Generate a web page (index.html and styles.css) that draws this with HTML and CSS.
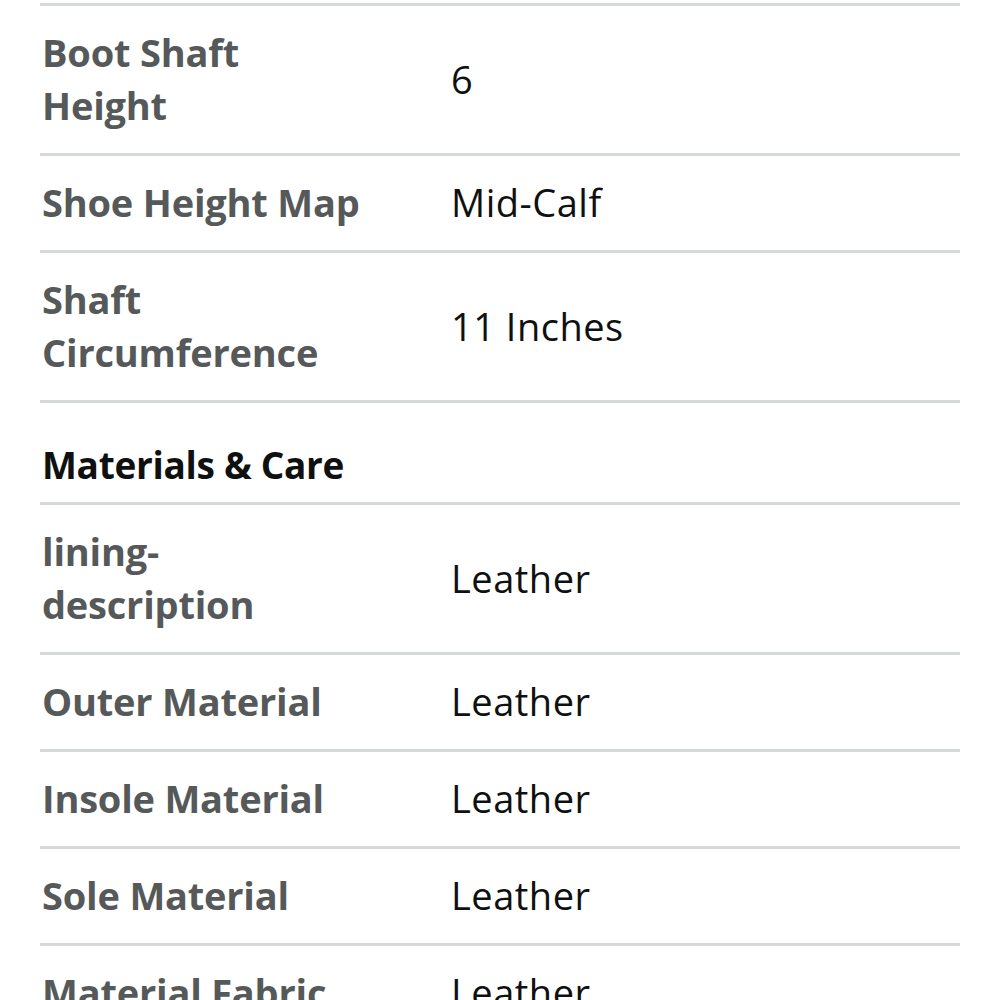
FILE: index.html
```html
<!DOCTYPE html>
<html>
<head>
<meta charset="utf-8">
<link rel="stylesheet" href="styles.css">
</head>
<body>
<div class="specs">
  <div class="row">
    <div class="label">Boot Shaft Height</div>
    <div class="value">6</div>
  </div>
  <div class="row">
    <div class="label">Shoe Height Map</div>
    <div class="value">Mid-Calf</div>
  </div>
  <div class="row">
    <div class="label">Shaft Circumference</div>
    <div class="value">11 Inches</div>
  </div>
  <div class="row section">
    <div class="heading">Materials &amp; Care</div>
  </div>
  <div class="row">
    <div class="label">lining-description</div>
    <div class="value">Leather</div>
  </div>
  <div class="row">
    <div class="label">Outer Material</div>
    <div class="value">Leather</div>
  </div>
  <div class="row">
    <div class="label">Insole Material</div>
    <div class="value">Leather</div>
  </div>
  <div class="row">
    <div class="label">Sole Material</div>
    <div class="value">Leather</div>
  </div>
  <div class="row">
    <div class="label">Material Fabric</div>
    <div class="value">Leather</div>
  </div>
</div>
</body>
</html>
```
FILE: styles.css
```css
html, body {
  margin: 0;
  padding: 0;
  background: #ffffff;
}
body {
  font-family: "Open Sans", "Noto Sans", sans-serif;
  overflow: hidden;
}
.specs {
  margin: 3px 40px 0 40px;
  border-top: 3px solid #d5d9d9;
}
.row {
  display: grid;
  grid-template-columns: 409px 1fr;
  align-items: center;
  padding: 20px 0 21px 2px;
  border-bottom: 3px solid #d5d9d9;
  font-size: 38px;
  line-height: 53px;
}
.label {
  color: #565959;
  font-weight: 700;
  width: 325px;
  letter-spacing: -0.2px;
  word-break: break-word;
}
.value {
  color: #0f1111;
  letter-spacing: 0.5px;
}
.section {
  padding-top: 35px;
  padding-bottom: 11px;
}
.heading {
  color: #0f1111;
  font-weight: 700;
  font-size: 37px;
  letter-spacing: -0.3px;
  grid-column: 1 / 3;
}
```
